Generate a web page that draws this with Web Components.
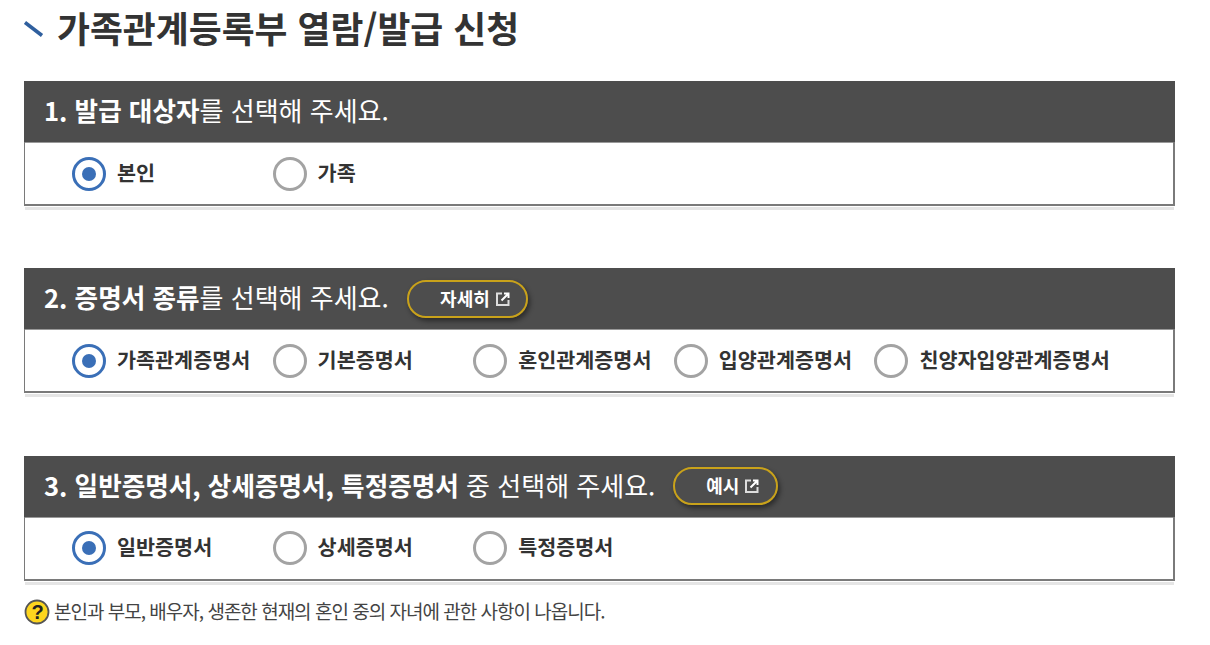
<!DOCTYPE html>
<html lang="ko">
<head>
<meta charset="utf-8">
<title>가족관계등록부 열람/발급 신청</title>
<style>
  html, body { margin: 0; background: #fff; }
  body { font-family: "Noto Sans CJK KR", "Noto Sans", sans-serif; color: #333; }
  .page { padding: 0 35px 0 24px; }
  b { font-size: 25.6px; }
</style>
</head>
<body>
<div class="page">
  <page-title>가족관계등록부 열람/발급 신청</page-title>

  <step-panel>
    <span slot="heading"><b>1. 발급 대상자</b>를 선택해 주세요.</span>
    <radio-option checked>본인</radio-option>
    <radio-option>가족</radio-option>
  </step-panel>

  <step-panel>
    <span slot="heading"><b>2. 증명서 종류</b>를 선택해 주세요.</span>
    <link-button slot="action">자세히</link-button>
    <radio-option checked>가족관계증명서</radio-option>
    <radio-option>기본증명서</radio-option>
    <radio-option>혼인관계증명서</radio-option>
    <radio-option>입양관계증명서</radio-option>
    <radio-option>친양자입양관계증명서</radio-option>
  </step-panel>

  <step-panel>
    <span slot="heading"><b>3. 일반증명서, 상세증명서, 특정증명서</b> 중 선택해 주세요.</span>
    <link-button slot="action" class="short">예시</link-button>
    <radio-option checked>일반증명서</radio-option>
    <radio-option>상세증명서</radio-option>
    <radio-option>특정증명서</radio-option>
  </step-panel>

  <help-note>본인과 부모, 배우자, 생존한 현재의 혼인 중의 자녀에 관한 사항이 나옵니다.</help-note>
</div>

<script>
class PageTitle extends HTMLElement {
  constructor() {
    super();
    this.attachShadow({ mode: 'open' });
    this.shadowRoot.innerHTML = `
      <style>
        :host { display: flex; align-items: center; height: 58px; margin-bottom: 23px; }
        svg { width: 20px; height: 20px; margin-right: 13px; flex: none; }
        h1 { margin: 0; padding-bottom: 4px; font-size: 35.8px; font-weight: 700; color: #333; line-height: 54px; white-space: nowrap; }
      </style>
      <svg viewBox="0 0 20 20"><path d="M1 3.5 L18 16.5" stroke="#2f5f9e" stroke-width="3.6" fill="none"/></svg>
      <h1><slot></slot></h1>
    `;
  }
}

class StepPanel extends HTMLElement {
  constructor() {
    super();
    this.attachShadow({ mode: 'open' });
    this.shadowRoot.innerHTML = `
      <style>
        :host { display: block; margin-bottom: 58.4px; }
        :host(:last-of-type) { margin-bottom: 0; }
        .box { border: 2px solid #7a7a7a; border-top: 0; border-left-width: 1px; }
        .head {
          display: flex; align-items: center; gap: 18px;
          height: 61px; margin: 0 -2px 0 -1px; padding: 0 20px 0 20px;
          background: #4d4d4d; color: #fff;
          font-size: 26px; white-space: nowrap;
        }
        .body {
          display: grid; grid-template-columns: repeat(5, 200.6px);
          align-items: center; height: 62px; padding-left: 47px;
          border-top: 1px solid #999; box-sizing: border-box;
        }
        .under { height: 3px; margin: 1px 1px 0 1px; background: #e5e5e5; }
        ::slotted(span) { font-weight: 400; padding-bottom: 4px; }
      </style>
      <div class="box">
        <div class="head"><slot name="heading"></slot><slot name="action"></slot></div>
        <div class="body"><slot></slot></div>
      </div>
      <div class="under"></div>
    `;
  }
}

class RadioOption extends HTMLElement {
  constructor() {
    super();
    this.attachShadow({ mode: 'open' });
    const on = this.hasAttribute('checked');
    this.shadowRoot.innerHTML = `
      <style>
        :host { display: flex; align-items: center; gap: 11px; white-space: nowrap; }
        .dot {
          width: 34px; height: 34px; box-sizing: border-box; flex: none;
          border-radius: 50%; border: 3px solid ${on ? '#3a6fb7' : '#a3a3a3'};
          display: flex; align-items: center; justify-content: center; background: #fff;
        }
        .dot i { width: 14px; height: 14px; border-radius: 50%; background: #3a6fb7; display: ${on ? 'block' : 'none'}; }
        label { font-size: 20.7px; font-weight: 700; color: #333; padding-bottom: 4px; }
      </style>
      <span class="dot"><i></i></span>
      <label><slot></slot></label>
    `;
  }
}

class LinkButton extends HTMLElement {
  constructor() {
    super();
    this.attachShadow({ mode: 'open' });
    this.shadowRoot.innerHTML = `
      <style>
        :host {
          display: inline-flex; align-items: center; justify-content: flex-end; gap: 6px;
          width: 121px; height: 38px; box-sizing: border-box; padding-right: 16px;
          border: 2px solid #c9a21a; border-radius: 19px;
          box-shadow: 2px 3px 5px rgba(0,0,0,.45);
          color: #fff; font-size: 18px; font-weight: 700;
        }
        :host(.short) { width: 105px; padding-right: 17px; }
        span { padding-bottom: 2px; }
        svg { width: 14px; height: 14px; flex: none; }
      </style>
      <span><slot></slot></span>
      <svg viewBox="0 0 14 14" fill="none" stroke="#ddd" stroke-width="2">
        <path d="M6 1.5H1V13H12.5V8"/>
        <path d="M5.5 8.5 L12 2 M8 1.5H12.5V6" stroke="#fff"/>
      </svg>
    `;
  }
}

class HelpNote extends HTMLElement {
  constructor() {
    super();
    this.attachShadow({ mode: 'open' });
    this.shadowRoot.innerHTML = `
      <style>
        :host { display: flex; align-items: center; gap: 4px; margin-top: 12px; font-size: 19px; color: #444; letter-spacing: -1px; white-space: nowrap; }
        span { padding-bottom: 3px; }
        svg { width: 26px; height: 26px; flex: none; }
        text { font-family: "Liberation Sans", sans-serif; font-weight: 700; font-size: 20px; }
      </style>
      <svg viewBox="0 0 26 26">
        <circle cx="13" cy="13" r="11.5" fill="#fdd51e" stroke="#555" stroke-width="1.8"/>
        <text x="13" y="20" text-anchor="middle" fill="#222">?</text>
      </svg>
      <span><slot></slot></span>
    `;
  }
}

customElements.define('page-title', PageTitle);
customElements.define('step-panel', StepPanel);
customElements.define('radio-option', RadioOption);
customElements.define('link-button', LinkButton);
customElements.define('help-note', HelpNote);
</script>
</body>
</html>
